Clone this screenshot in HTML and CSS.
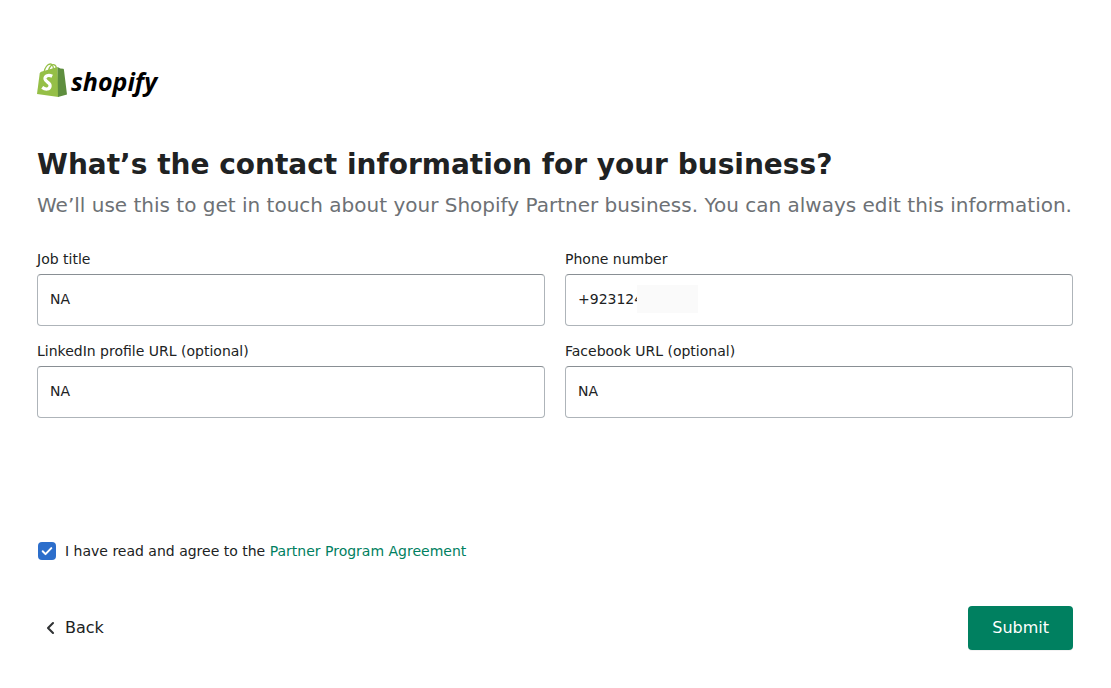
FILE: index.html
```html
<!DOCTYPE html>
<html lang="en">
<head>
<meta charset="utf-8">
<meta name="viewport" content="width=device-width, initial-scale=1">
<title>Shopify Partners</title>
<link rel="stylesheet" href="styles.css">
</head>
<body>
<main class="page">
  <div class="logo">
    <svg class="logo-bag" viewBox="0 0 30 34" aria-hidden="true">
      <path d="M0 31 2.7 10.5Q2.9 9.2 4.2 8.8L20.5 4 21.5 34Z" fill="#95bf47"/>
      <path d="M20.5 4 23.4 5.5 26.2 5.8Q26.8 5.9 26.9 6.5L30 31.6 21 34Z" fill="#5e8e3e"/>
      <path d="M7.2 8.7C8 4.6 10.5 1.2 13.2 1c2.3-.1 3.3 2.7 3.2 5.6M11.6 7.5C12.4 3.8 14.8 1.3 16.8 1.7c1.7.3 2.5 2 2.6 4.1" fill="none" stroke="#95bf47" stroke-width="1.3"/>
      <path d="M15.2 13.2C11.4 11.3 7.7 12.7 8 16c.4 3.2 5.5 3.2 5.1 7-.4 3.6-4.5 3.9-7.9 1.4" fill="none" stroke="#fff" stroke-width="3.2"/>
    </svg>
    <span class="logo-name">shopify</span>
  </div>
  <h1 class="title">What’s the contact information for your business?</h1>
  <p class="subtitle">We’ll use this to get in touch about your Shopify Partner business. You can always edit this information.</p>
  <form class="form">
    <div class="fields">
      <div class="field">
        <label class="label" for="job">Job title</label>
        <input class="input" id="job" type="text" value="NA">
      </div>
      <div class="field">
        <label class="label" for="phone">Phone number</label>
        <div class="input-wrap">
          <input class="input" id="phone" type="tel" value="+923124">
          <span class="redaction"></span>
        </div>
      </div>
      <div class="field">
        <label class="label" for="linkedin">LinkedIn profile URL (optional)</label>
        <input class="input" id="linkedin" type="text" value="NA">
      </div>
      <div class="field">
        <label class="label" for="facebook">Facebook URL (optional)</label>
        <input class="input" id="facebook" type="text" value="NA">
      </div>
    </div>
    <div class="agree">
      <span class="check">
        <input class="checkbox" id="agree" type="checkbox" checked>
        <svg class="tick" viewBox="0 0 18 18" aria-hidden="true"><path d="m4.7 9.3 2.8 2.8 5.8-6" fill="none" stroke="#fff" stroke-width="2" stroke-linecap="round" stroke-linejoin="round"/></svg>
      </span>
      <label for="agree">I have read and agree to the <a class="link" href="#">Partner Program Agreement</a></label>
    </div>
    <div class="actions">
      <button class="back" type="button">
        <svg class="chevron" viewBox="0 0 10 14" aria-hidden="true"><path d="M8 2 3 7l5 5" fill="none" stroke="#303335" stroke-width="2.1" stroke-linecap="round" stroke-linejoin="round"/></svg>
        Back
      </button>
      <button class="submit" type="submit">Submit</button>
    </div>
  </form>
</main>
</body>
</html>
```
FILE: styles.css
```css
* { box-sizing: border-box; }
body {
  margin: 0;
  background: #fff;
  color: #202223;
  font: 14px/20px "DejaVu Sans", sans-serif;
}
.page { padding: 63px 38px 38px 37px; }
.logo { display: flex; gap: 4px; height: 34px; }
.logo-bag { width: 30px; height: 34px; }
.logo-name {
  color: #000;
  font: italic 700 25px/36px "Open Sans", sans-serif;
}
.title { margin: 50px 0 0; font-size: 28px; line-height: 36px; font-weight: 700; }
.subtitle { margin: 8px 0 0; color: #6d7175; font-size: 20px; line-height: 28px; }
.fields {
  display: grid;
  grid-template-columns: 1fr 1fr;
  gap: 15px 20px;
  margin-top: 30px;
}
.field { display: flex; flex-direction: column; gap: 5px; }
.label { line-height: 20px; }
.input-wrap { position: relative; }
.input {
  display: block;
  width: 100%;
  height: 52px;
  padding: 0 12px 2px;
  border: 1px solid #aeb4b9;
  border-top-color: #898f94;
  border-radius: 4px;
  background: #fff;
  color: #202223;
  font: inherit;
}
.redaction {
  position: absolute;
  left: 72px;
  top: 11px;
  width: 61px;
  height: 28px;
  background: #fafafa;
}
.agree { display: flex; align-items: center; gap: 9px; margin: 123px 0 0 1px; }
.check { position: relative; width: 18px; height: 18px; }
.checkbox {
  display: block;
  width: 18px;
  height: 18px;
  margin: 0;
  appearance: none;
  border-radius: 4px;
}
.checkbox:checked { background: #2c6ecb; }
.tick { position: absolute; inset: 0; pointer-events: none; }
.link { color: #008060; text-decoration: none; }
.actions {
  display: flex;
  justify-content: space-between;
  align-items: center;
  margin-top: 45px;
}
.back, .submit {
  height: 44px;
  border: 0;
  font: 16px/20px "DejaVu Sans", sans-serif;
}
.back {
  display: flex;
  align-items: center;
  gap: 10px;
  padding: 0 8px;
  background: none;
  color: #202223;
}
.chevron { width: 10px; height: 14px; }
.submit {
  padding: 0 24px;
  border-radius: 4px;
  background: #008060;
  color: #fff;
  box-shadow: 0 1px 0 rgba(0, 0, 0, .05);
}
```
